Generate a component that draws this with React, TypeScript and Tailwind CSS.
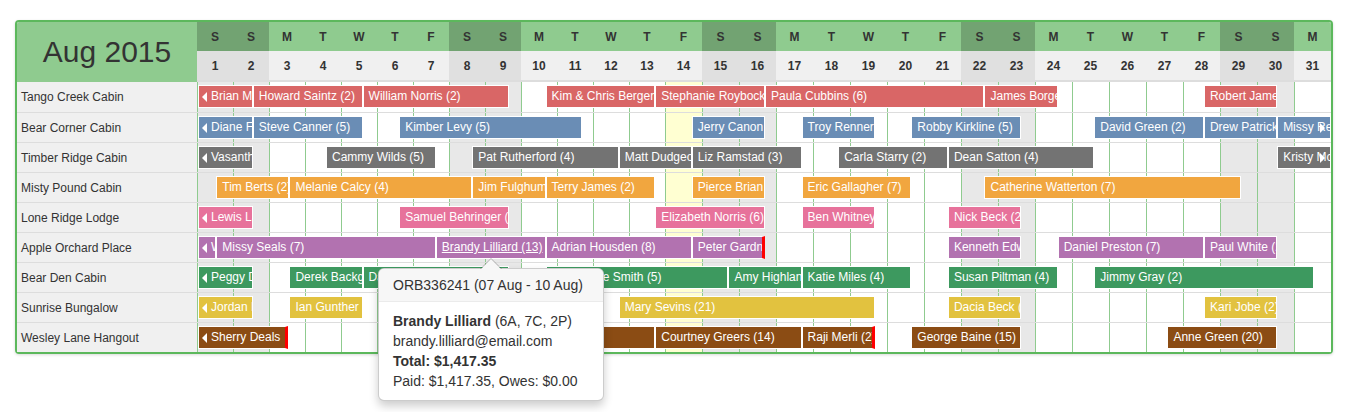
import React from "react";

type Bar = { s: number; e: number; t: string; l?: boolean; r?: boolean; red?: boolean; u?: boolean };
type Row = { name: string; color: string; bars: Bar[] };

const W = 1134 / 31;
const DOW = ["S", "S", "M", "T", "W", "T", "F"];
const days = Array.from({ length: 31 }, (_, i) => ({
  d: i + 1,
  dow: DOW[i % 7],
  weekend: i % 7 < 2,
  today: i + 1 === 14,
}));

const rows: Row[] = [
  {
    name: "Tango Creek Cabin",
    color: "bg-[#d96666]",
    bars: [
      { s: 1, e: 2.5, t: "Brian Mitchell", l: true },
      { s: 2.5, e: 5.5, t: "Howard Saintz (2)" },
      { s: 5.5, e: 9.5, t: "William Norris (2)" },
      { s: 10.5, e: 13.5, t: "Kim & Chris Berger (3)" },
      { s: 13.5, e: 16.5, t: "Stephanie Roybock (3)" },
      { s: 16.5, e: 22.5, t: "Paula Cubbins (6)" },
      { s: 22.5, e: 24.5, t: "James Borges (2)" },
      { s: 28.5, e: 30.5, t: "Robert James (2)" },
    ],
  },
  {
    name: "Bear Corner Cabin",
    color: "bg-[#6a8db5]",
    bars: [
      { s: 1, e: 2.5, t: "Diane Fletcher", l: true },
      { s: 2.5, e: 5.5, t: "Steve Canner (5)" },
      { s: 6.5, e: 11.5, t: "Kimber Levy (5)" },
      { s: 14.5, e: 16.5, t: "Jerry Canon (2)" },
      { s: 17.5, e: 19.5, t: "Troy Renner (2)" },
      { s: 20.5, e: 23.5, t: "Robby Kirkline (5)" },
      { s: 25.5, e: 28.5, t: "David Green (2)" },
      { s: 28.5, e: 30.5, t: "Drew Patrick (2)" },
      { s: 30.5, e: 33, t: "Missy Reed (4)", r: true },
    ],
  },
  {
    name: "Timber Ridge Cabin",
    color: "bg-[#737373]",
    bars: [
      { s: 1, e: 2.5, t: "Vasanth Kumar", l: true },
      { s: 4.5, e: 7.5, t: "Cammy Wilds (5)" },
      { s: 8.5, e: 12.5, t: "Pat Rutherford (4)" },
      { s: 12.5, e: 14.5, t: "Matt Dudgeon (2)" },
      { s: 14.5, e: 17.5, t: "Liz Ramstad (3)" },
      { s: 18.5, e: 21.5, t: "Carla Starry (2)" },
      { s: 21.5, e: 25.5, t: "Dean Satton (4)" },
      { s: 30.5, e: 33, t: "Kristy McAllister (3)", r: true },
    ],
  },
  {
    name: "Misty Pound Cabin",
    color: "bg-[#f1a63f]",
    bars: [
      { s: 1.5, e: 3.5, t: "Tim Berts (2)" },
      { s: 3.5, e: 8.5, t: "Melanie Calcy (4)" },
      { s: 8.5, e: 10.5, t: "Jim Fulghum (2)" },
      { s: 10.5, e: 13.5, t: "Terry James (2)" },
      { s: 14.5, e: 16.5, t: "Pierce Brian (2)" },
      { s: 17.5, e: 20.5, t: "Eric Gallagher (7)" },
      { s: 22.5, e: 29.5, t: "Catherine Watterton (7)" },
    ],
  },
  {
    name: "Lone Ridge Lodge",
    color: "bg-[#e7729b]",
    bars: [
      { s: 1, e: 2.5, t: "Lewis Lane", l: true },
      { s: 6.5, e: 9.5, t: "Samuel Behringer (3)" },
      { s: 13.5, e: 16.5, t: "Elizabeth Norris (6)" },
      { s: 17.5, e: 19.5, t: "Ben Whitney (2)" },
      { s: 21.5, e: 23.5, t: "Nick Beck (2)" },
    ],
  },
  {
    name: "Apple Orchard Place",
    color: "bg-[#b272b0]",
    bars: [
      { s: 1, e: 1.5, t: "Wendy Marsh", l: true },
      { s: 1.5, e: 7.5, t: "Missy Seals (7)" },
      { s: 7.5, e: 10.5, t: "Brandy Lilliard (13)", u: true },
      { s: 10.5, e: 14.5, t: "Adrian Housden (8)" },
      { s: 14.5, e: 16.5, t: "Peter Gardner (2)", red: true },
      { s: 21.5, e: 23.5, t: "Kenneth Edwards (2)" },
      { s: 24.5, e: 28.5, t: "Daniel Preston (7)" },
      { s: 28.5, e: 30.5, t: "Paul White (2)" },
    ],
  },
  {
    name: "Bear Den Cabin",
    color: "bg-[#3d995f]",
    bars: [
      { s: 1, e: 2.5, t: "Peggy Dawson", l: true },
      { s: 3.5, e: 5.5, t: "Derek Backgrove (2)" },
      { s: 5.5, e: 9.5, t: "Dan Morris (4)" },
      { s: 10.5, e: 15.5, t: "Rosemarie Smith (5)" },
      { s: 15.5, e: 17.5, t: "Amy Highland (2)" },
      { s: 17.5, e: 20.5, t: "Katie Miles (4)" },
      { s: 21.5, e: 24.5, t: "Susan Piltman (4)" },
      { s: 25.5, e: 31.5, t: "Jimmy Gray (2)" },
    ],
  },
  {
    name: "Sunrise Bungalow",
    color: "bg-[#e2c23f]",
    bars: [
      { s: 1, e: 2.5, t: "Jordan Lee", l: true },
      { s: 3.5, e: 5.5, t: "Ian Gunther (2)" },
      { s: 12.5, e: 19.5, t: "Mary Sevins (21)" },
      { s: 21.5, e: 23.5, t: "Dacia Beck (2)" },
      { s: 28.5, e: 30.5, t: "Kari Jobe (2)" },
    ],
  },
  {
    name: "Wesley Lane Hangout",
    color: "bg-[#8b4c14]",
    bars: [
      { s: 1, e: 3.45, t: "Sherry Deals", l: true, red: true },
      { s: 7.5, e: 13.5, t: "Tony Marsh (6)" },
      { s: 13.5, e: 17.5, t: "Courtney Greers (14)" },
      { s: 17.5, e: 19.5, t: "Raji Merli (2)", red: true },
      { s: 20.5, e: 23.5, t: "George Baine (15)" },
      { s: 27.5, e: 30.5, t: "Anne Green (20)" },
    ],
  },
];

const GRID = "grid grid-cols-[repeat(13,36px)_repeat(18,37px)]";

function BarView({ b, color }: { b: Bar; color: string }) {
  const left = (b.s - 1) * W + 1;
  const right = Math.min((b.e - 1) * W + 1, 1134);
  return (
    <div
      className={`absolute top-[3px] h-[23px] border border-white ${color} ${
        b.red ? "border-r-[3px] border-r-[#ff0000]" : ""
      } ${b.l ? "pl-[3px]" : "pl-[5px]"} flex items-center overflow-hidden whitespace-nowrap text-[12px] leading-[21px] text-white`}
      style={{ left, width: right - left }}
    >
      {b.l && (
        <span className="mr-[4px] h-0 w-0 shrink-0 border-y-[5px] border-r-[5px] border-y-transparent border-r-white" />
      )}
      <span className={`shrink-0 ${b.u ? "underline" : ""}`}>{b.t}</span>
      {b.r && (
        <span className="absolute right-[5px] top-1/2 h-0 w-0 -translate-y-1/2 border-y-[5px] border-l-[5px] border-y-transparent border-l-white" />
      )}
    </div>
  );
}

export default function App() {
  return (
    <div className="relative h-[412px] w-[1349px] bg-white pl-[15px] pt-[20px] font-['Liberation_Sans',Arial,sans-serif] text-[#333]">
      <div className="w-[1318px] rounded-[4px] border-2 border-[#5cb85c] shadow-[0_1px_3px_rgba(0,0,0,0.15)]">
        {/* header */}
        <div className="flex">
          <div className="flex h-[60px] w-[180px] items-center justify-center rounded-tl-[2px] bg-[#8fcb8f] text-[30px] leading-none text-[#333]">
            Aug 2015
          </div>
          <div className="w-[1134px] border-b-2 border-[#dddddd]">
            <div className={`${GRID} h-[29px]`}>
              {days.map((d) => (
                <div
                  key={d.d}
                  className={`flex items-center justify-center text-[12px] font-bold ${
                    d.weekend ? "bg-[#72a372]" : "bg-[#8fcb8f]"
                  } ${d.d === 31 ? "rounded-tr-[2px]" : ""}`}
                >
                  {d.dow}
                </div>
              ))}
            </div>
            <div className={`${GRID} h-[29px]`}>
              {days.map((d) => (
                <div
                  key={d.d}
                  className={`flex items-center justify-center text-[12px] font-bold ${
                    d.weekend ? "bg-[#e0e0e0]" : "bg-[#f0f0f0]"
                  }`}
                >
                  {d.d}
                </div>
              ))}
            </div>
          </div>
        </div>
        {/* body */}
        {rows.map((row, ri) => (
          <div key={row.name} className={`flex h-[30px] ${ri > 0 ? "border-t border-[#dddddd]" : ""}`}>
            <div className="flex w-[180px] items-center bg-[#f0f0f0] pl-[4px] text-[12px] text-[#333]">
              {row.name}
            </div>
            <div className="relative w-[1134px] overflow-hidden">
              <div className={`${GRID} h-full`}>
                {days.map((d) => (
                  <div
                    key={d.d}
                    className={`border-l border-[#8fcb8f] ${
                      d.today ? "bg-[#ffffd2]" : d.weekend ? "bg-[#e8e8e8]" : "bg-white"
                    }`}
                  />
                ))}
              </div>
              {row.bars.map((b, bi) => (
                <BarView key={bi} b={b} color={row.color} />
              ))}
            </div>
          </div>
        ))}
      </div>

      {/* popover */}
      <div className="absolute left-[378px] top-[268px] z-10 w-[226px] rounded-[6px] border border-[rgba(0,0,0,0.2)] bg-white text-[14px] text-[#333] shadow-[0_5px_10px_rgba(0,0,0,0.2)]">
        <div className="absolute left-1/2 top-[-11px] -ml-[11px] h-0 w-0 border-x-[11px] border-b-[11px] border-x-transparent border-b-[rgba(0,0,0,0.25)]" />
        <div className="absolute left-1/2 top-[-10px] -ml-[10px] h-0 w-0 border-x-[10px] border-b-[10px] border-x-transparent border-b-[#f7f7f7]" />
        <div className="whitespace-nowrap rounded-t-[5px] border-b border-[#ebebeb] bg-[#f7f7f7] px-[14px] py-[8px] leading-[16px]">
          ORB336241 (07 Aug - 10 Aug)
        </div>
        <div className="whitespace-nowrap px-[14px] py-[9px] leading-[20px]">
          <div>
            <span className="font-bold">Brandy Lilliard</span> (6A, 7C, 2P)
          </div>
          <div>brandy.lilliard@email.com</div>
          <div className="font-bold">Total: $1,417.35</div>
          <div>Paid: $1,417.35, Owes: $0.00</div>
        </div>
      </div>
    </div>
  );
}
